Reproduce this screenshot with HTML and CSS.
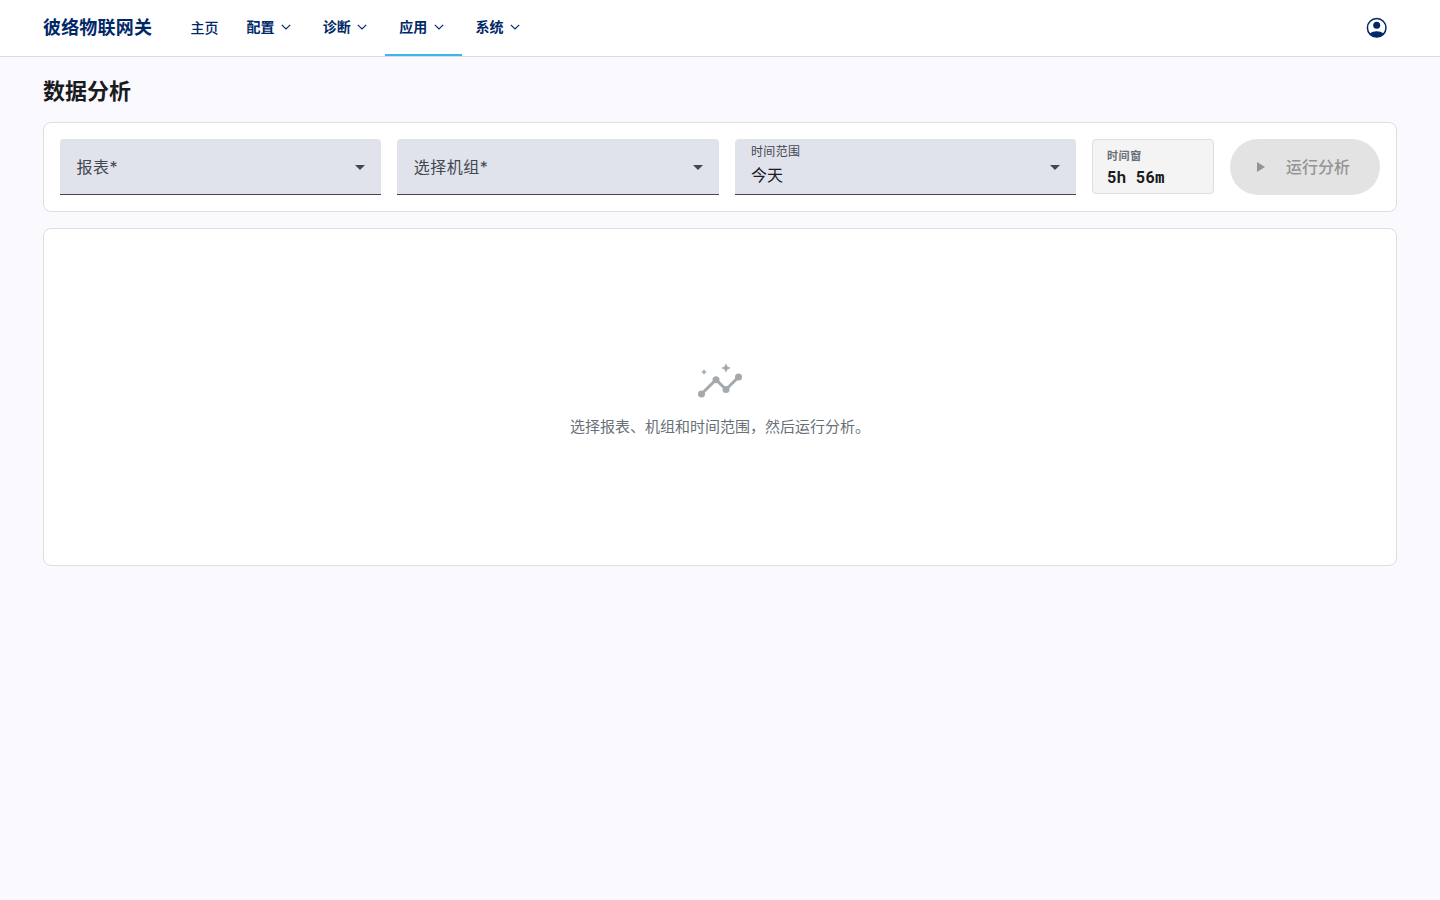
FILE: index.html
```html
<!DOCTYPE html>
<html lang="zh-CN">
<head>
<meta charset="utf-8">
<title>数据分析</title>
<link rel="stylesheet" href="styles.css">
</head>
<body>
<header class="topbar">
  <div class="brand">彼络物联网关</div>
  <nav class="nav">
    <a class="nav-item nav-home">主页</a>
    <a class="nav-item">配置<svg class="chevron" viewBox="0 0 10 6"><path d="M.8.800l4.200 4.200L9.200.8"/></svg></a>
    <a class="nav-item">诊断<svg class="chevron" viewBox="0 0 10 6"><path d="M.8.800l4.200 4.200L9.200.8"/></svg></a>
    <a class="nav-item active">应用<svg class="chevron" viewBox="0 0 10 6"><path d="M.8.800l4.200 4.200L9.200.8"/></svg></a>
    <a class="nav-item">系统<svg class="chevron" viewBox="0 0 10 6"><path d="M.8.800l4.200 4.200L9.200.8"/></svg></a>
  </nav>
  <svg class="account" viewBox="0 0 24 24"><circle cx="11.700" cy="11.800" r="9.300" fill="none" stroke="currentColor" stroke-width="1.500"/><circle cx="11.700" cy="9.300" r="3.500"/><path d="M5 17.600C6.700 16 9.100 15.200 11.700 15.200s5 .8 6.700 2.400A9.400 9.400 0 0 1 11.700 21.300a9.400 9.400 0 0 1-6.700-3.700z"/></svg>
</header>
<main class="page">
  <h1 class="title">数据分析</h1>
  <section class="card filters">
    <div class="field"><span class="placeholder">报表*</span><svg class="arrow" viewBox="0 0 10 5"><path d="M0 0h10L5 5z"/></svg></div>
    <div class="field"><span class="placeholder">选择机组*</span><svg class="arrow" viewBox="0 0 10 5"><path d="M0 0h10L5 5z"/></svg></div>
    <div class="field range"><div class="stack"><span class="label">时间范围</span><span class="value">今天</span></div><svg class="arrow" viewBox="0 0 10 5"><path d="M0 0h10L5 5z"/></svg></div>
    <div class="window"><span class="window-label">时间窗</span><span class="window-value">5h 56m</span></div>
    <button class="run" disabled><svg class="play" viewBox="0 0 8 10"><path d="M0 0v10l8-5z"/></svg><span class="run-text">运行分析</span></button>
  </section>
  <section class="card empty">
    <svg class="insights" viewBox="0 0 48 48"><path d="M5.500 36L20 21.700l10 9.800L42.500 19" fill="none" stroke="currentColor" stroke-width="3"/><circle cx="5.500" cy="36" r="3.500"/><circle cx="20" cy="21.700" r="3.500"/><circle cx="30" cy="31.500" r="3.500"/><circle cx="42.500" cy="19" r="3.500"/><path d="M30 5.300l1.450 3.250L34.700 10l-3.250 1.450L30 14.700l-1.450-3.250L25.300 10l3.250-1.450z"/><path d="M8 11l.95 2.050L11 14l-2.050.95L8 17l-.95-2.050L5 14l2.050-.95z"/></svg>
    <p class="empty-text">选择报表、机组和时间范围，然后运行分析。</p>
  </section>
</main>
</body>
</html>
```
FILE: styles.css
```css
* { box-sizing: border-box; }
body {
  margin: 0;
  min-height: 100vh;
  background: #faf9fe;
  color: #1a1b1f;
  font-family: Inter, "Noto Sans CJK SC", sans-serif;
}
.topbar {
  display: flex;
  align-items: center;
  height: 57px;
  padding: 0 51px 0 43px;
  background: #fff;
  border-bottom: 1px solid #dcdee0;
  color: #002868;
}
.brand { width: 133.4px; font-size: 18px; font-weight: 700; line-height: 28px; letter-spacing: .18px; white-space: nowrap; }
.nav { display: flex; height: 56px; }
.nav-item {
  display: flex;
  align-items: center;
  gap: 6.400px;
  width: 76.4px;
  padding: 0 0 2px 14px;
  border-bottom: 2px solid transparent;
  font-size: 14px;
  font-weight: 600;
  white-space: nowrap;
}
.nav-home { width: 56px; padding-bottom: 0; font-weight: 500; }
.nav-item.active { border-bottom-color: #38b6f1; }
.chevron { width: 10px; height: 6px; margin-top: 1px; fill: none; stroke: currentColor; stroke-width: 1.150; }
.account { width: 24px; height: 24px; margin-left: auto; fill: currentColor; }
.page { padding: 18px 43px 0; }
.title { margin: 0 0 15px; font-size: 22px; line-height: 32px; font-weight: 700; }
.card { background: #fff; border: 1px solid #dcdee0; border-radius: 8px; }
.filters {
  display: grid;
  grid-template-columns: 321.300px 321.600px 341.100px 122px 150px;
  gap: 16px;
  height: 90px;
  padding: 16px;
}
.field {
  display: flex;
  align-items: center;
  justify-content: space-between;
  height: 56px;
  padding: 0 16px;
  background: #e0e2ec;
  border-bottom: 1px solid #44474f;
  border-radius: 4px 4px 0 0;
  color: #44474f;
}
.placeholder { padding: 0 0 2px .5px; font-size: 16px; letter-spacing: .5px; }
.arrow { width: 10px; height: 5px; margin-top: 1px; fill: #44474f; }
.stack { display: flex; flex-direction: column; padding-bottom: 4px; }
.label { font-size: 12px; line-height: 18px; letter-spacing: .4px; }
.value { color: #1a1b1f; font-size: 16px; line-height: 24px; margin-top: 2px; }
.window {
  display: flex;
  flex-direction: column;
  height: 55px;
  padding: 8px 14px 0;
  background: #f4f4f4;
  border: 1px solid #dcdee0;
  border-radius: 4px;
}
.window-label { color: #687078; font-size: 11px; font-weight: 600; line-height: 16px; letter-spacing: .6px; }
.window-value { font-family: "Roboto Mono", "JetBrains Mono", "DejaVu Sans Mono", monospace; font-size: 16px; font-weight: 700; line-height: 22px; margin-top: 2px; white-space: pre; }
.run {
  display: flex;
  align-items: center;
  gap: 20.500px;
  height: 56px;
  padding: 0 0 0 27.500px;
  border: 0;
  border-radius: 28px;
  background: #e3e3e3;
  color: #949494;
  font: 500 16px Inter, "Noto Sans CJK SC", sans-serif;
}
.run-text { padding-bottom: 2px; }
.play { width: 8px; height: 10px; fill: currentColor; }
.empty {
  display: flex;
  flex-direction: column;
  align-items: center;
  justify-content: center;
  gap: 10px;
  height: 338px;
  margin-top: 16px;
  padding-top: 1px;
}
.insights { width: 48px; height: 48px; color: #a4a9ae; fill: currentColor; }
.empty-text { margin: 0; color: #687078; font-size: 15px; line-height: 22px; }
```
